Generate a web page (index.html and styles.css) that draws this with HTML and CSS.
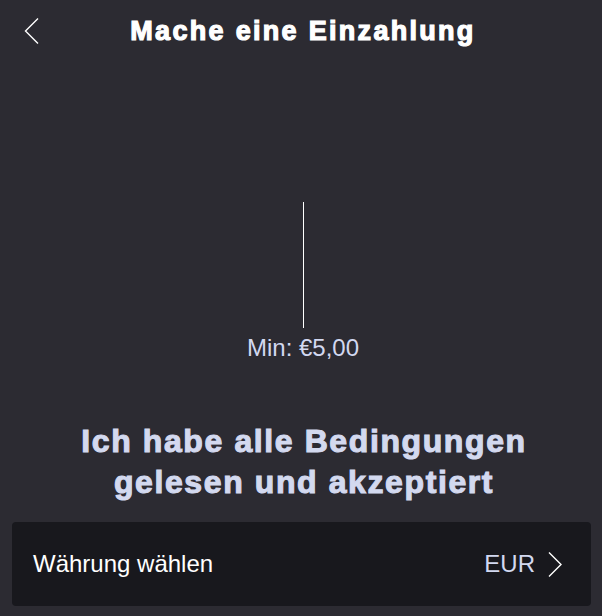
FILE: index.html
```html
<!DOCTYPE html>
<html lang="de">
<head>
    <meta charset="UTF-8">
    <meta name="viewport" content="width=device-width, initial-scale=1.0">
    <title>Mache eine Einzahlung</title>
    <link rel="stylesheet" href="styles.css">
</head>
<body>
    <header class="topbar">
        <button class="back-btn" aria-label="Zurück">
            <svg width="15" height="26" viewBox="0 0 15 26" fill="none" stroke="#ffffff" stroke-width="1.4">
                <path d="M14 0.5 L1.5 13 L14 25.5"/>
            </svg>
        </button>
        <h1>Mache eine Einzahlung</h1>
    </header>

    <main class="deposit">
        <div class="amount">
            <span class="cursor"></span>
            <p class="min">Min: €5,00</p>
        </div>

        <h2 class="terms">Ich habe alle Bedingungen gelesen und akzeptiert</h2>

        <div class="currency-row">
            <span class="label">Währung wählen</span>
            <span class="value">
                EUR
                <svg width="14" height="25" viewBox="0 0 14 25" fill="none" stroke="#ffffff" stroke-width="1.4">
                    <path d="M1 0.5 L13 12.5 L1 24.5"/>
                </svg>
            </span>
        </div>
    </main>
</body>
</html>
```

FILE: styles.css
```css
/* General */
body {
    margin: 0;
    padding: 0;
    background: #2c2b32;
    color: #fff;
    font-family: 'Liberation Sans', Arial, sans-serif;
    height: 616px;
    overflow: hidden;
}

/* Top bar */
.topbar {
    position: relative;
    height: 64px;
    display: flex;
    align-items: center;
    justify-content: center;
}

.topbar h1 {
    margin: 0;
    font-size: 27px;
    font-weight: bold;
    -webkit-text-stroke: 1.2px #fff;
    letter-spacing: 2.3px;
    position: relative;
    top: -1px;
    left: 2px;
}

.back-btn {
    position: absolute;
    left: 24px;
    top: 18px;
    padding: 0;
    background: none;
    border: none;
    cursor: pointer;
}

/* Amount */
.deposit {
    display: flex;
    flex-direction: column;
}

.amount {
    display: flex;
    flex-direction: column;
    align-items: center;
    padding-top: 138px;
}

.cursor {
    display: block;
    width: 1px;
    height: 126px;
    background: #fff;
    position: relative;
    left: 2px;
}

.min {
    margin: 6px 0 0 4px;
    font-size: 24px;
    line-height: 28px;
    color: #d2d8f0;
}

/* Terms */
.terms {
    margin: 59px 0 0;
    text-align: center;
    font-size: 32px;
    line-height: 41px;
    font-weight: bold;
    color: #d3d9ef;
    -webkit-text-stroke: 1.1px #d3d9ef;
    letter-spacing: 1.6px;
    padding: 0 54px 0 60px;
}

/* Currency selector */
.currency-row {
    margin: 19px 11px 0 12px;
    height: 84px;
    background: #18181d;
    border-radius: 4px;
    display: flex;
    align-items: center;
    justify-content: space-between;
    padding: 0 29px 0 21px;
}

.currency-row .label {
    font-size: 24px;
    color: #fff;
}

.currency-row .value {
    display: flex;
    align-items: center;
    gap: 13px;
    font-size: 24px;
    color: #d2d8f0;
}
```
